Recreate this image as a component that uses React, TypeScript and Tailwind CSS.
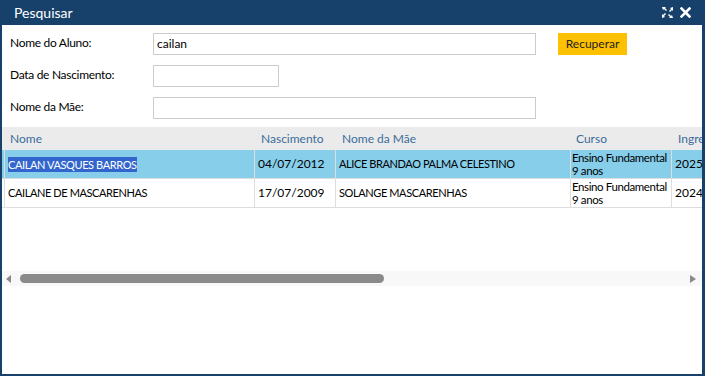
import React from 'react';

const rows = [
  { nome: 'CAILAN VASQUES BARROS', nasc: '04/07/2012', mae: 'ALICE BRANDAO PALMA CELESTINO', curso: ['Ensino Fundamental', '9 anos'], ingr: '2025', selected: true },
  { nome: 'CAILANE DE MASCARENHAS', nasc: '17/07/2009', mae: 'SOLANGE MASCARENHAS', curso: ['Ensino Fundamental', '9 anos'], ingr: '2024', selected: false },
];

function ExpandIcon() {
  return (
    <svg width="11" height="11" viewBox="0 0 11 11" fill="white">
      <path d="M0 0h4L3 1l2 2-1 1-2-2-1 1z" />
      <path d="M11 0v4L10 3 8 5 7 4l2-2-1-1z" />
      <path d="M0 11V7l1 1 2-2 1 1-2 2 1 1z" />
      <path d="M11 11H7l1-1-2-2 1-1 2 2 1-1z" />
    </svg>
  );
}

function CloseIcon() {
  return (
    <svg width="11" height="11" viewBox="0 0 11 11">
      <path d="M1.5 1.5l8 8M9.5 1.5l-8 8" stroke="white" strokeWidth="2.6" strokeLinecap="square" />
    </svg>
  );
}

export default function App() {
  return (
    <div className="w-[705px] h-[376px] bg-[#17416b] flex flex-col overflow-hidden" style={{ fontFamily: 'Lato, "Noto Sans", sans-serif' }}>
      {/* title bar */}
      <div className="h-[25px] shrink-0 flex items-center justify-between pl-[14px] pr-[14px]">
        <span className="text-white text-[14px] leading-none">Pesquisar</span>
        <div className="flex items-center gap-[7px]">
          <ExpandIcon />
          <CloseIcon />
        </div>
      </div>

      {/* body */}
      <div className="flex-1 bg-white ml-[2px] mr-[3px] mb-[2px] flex flex-col text-[12px] text-black">
        {/* form */}
        <div className="pt-[8px] pl-[8px] flex flex-col gap-[10px]">
          <div className="flex items-start">
            <label className="w-[143px] pt-[2px] leading-[16px] tracking-[-0.3px]">Nome do Aluno:</label>
            <div className="w-[383px] h-[22px] border border-[#cccccc] px-[3px] flex items-center">cailan</div>
            <button className="ml-[22px] w-[69px] h-[22px] bg-[#ffc000] text-[#222]">Recuperar</button>
          </div>
          <div className="flex items-start">
            <label className="w-[143px] pt-[2px] leading-[16px] tracking-[-0.3px]">Data de Nascimento:</label>
            <div className="w-[126px] h-[22px] border border-[#cccccc]" />
          </div>
          <div className="flex items-start">
            <label className="w-[143px] pt-[2px] leading-[16px] tracking-[-0.3px]">Nome da Mãe:</label>
            <div className="w-[383px] h-[22px] border border-[#cccccc]" />
          </div>
        </div>

        {/* grid */}
        <div className="mt-[8px] overflow-hidden">
          <div className="w-[760px]">
            <div className="h-[23px] bg-[#ebebeb] flex items-center text-[#3b6c9c]">
              <div className="w-[253px] pl-[8px]">Nome</div>
              <div className="w-[81px] pl-[6px]">Nascimento</div>
              <div className="w-[235px] pl-[6px]">Nome da Mãe</div>
              <div className="w-[101px] pl-[5px]">Curso</div>
              <div className="w-[80px] pl-[6px]">Ingresso</div>
            </div>
            {rows.map((r) => (
              <div key={r.nome} className={`h-[29px] flex border-b border-[#dddddd] whitespace-nowrap ${r.selected ? 'bg-[#87ceeb]' : 'bg-white'}`}>
                <div className="w-[3px] border-r border-[#dddddd]" />
                <div className="w-[250px] border-r border-[#dddddd] pl-[3px] flex items-center text-[11px] tracking-[-0.4px]">
                  <span className={r.selected ? 'bg-[#3266cc] text-white leading-[15px]' : ''}>{r.nome}</span>
                </div>
                <div className="w-[81px] border-r border-[#dddddd] pl-[3px] flex items-center">{r.nasc}</div>
                <div className="w-[235px] border-r border-[#dddddd] pl-[3px] flex items-center text-[11px] tracking-[-0.4px]">{r.mae}</div>
                <div className="w-[101px] border-r border-[#dddddd] pl-[1px] flex flex-col justify-center text-[11.5px] leading-[13px] tracking-[-0.4px] overflow-hidden">
                  <span>{r.curso[0]}</span>
                  <span>{r.curso[1]}</span>
                </div>
                <div className="w-[80px] pl-[3px] flex items-center">{r.ingr}</div>
              </div>
            ))}
          </div>
        </div>

        {/* horizontal scrollbar */}
        <div className="mt-[63px] h-[15px] bg-[#f8f8f8] flex items-center px-[4px]">
          <svg width="6" height="8" viewBox="0 0 6 8"><path d="M5 0v8L0 4z" fill="#8a8a8a" /></svg>
          <div className="ml-[8px] w-[364px] h-[9px] rounded-full bg-[#8a8a8a]" />
          <div className="flex-1" />
          <svg width="6" height="8" viewBox="0 0 6 8" className="mr-[2px]"><path d="M0 0v8l6-4z" fill="#8a8a8a" /></svg>
        </div>
      </div>
    </div>
  );
}
